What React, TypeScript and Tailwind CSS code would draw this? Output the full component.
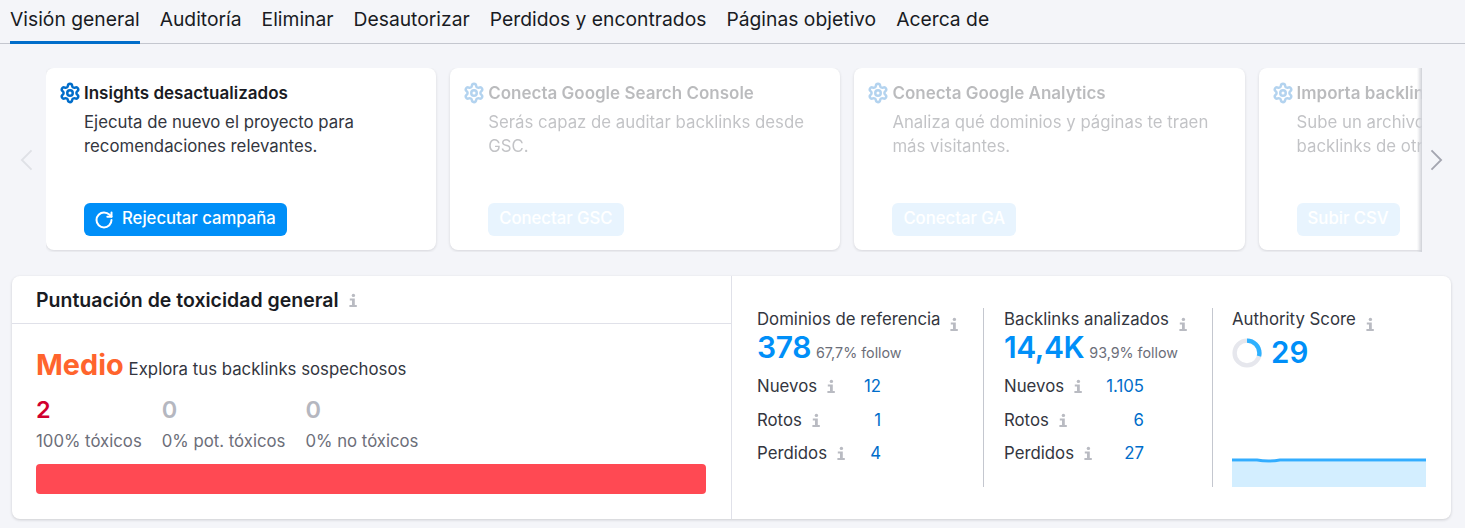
import { RotateCw, Settings } from "lucide-react";

const tabs = [
  "Visión general",
  "Auditoría",
  "Eliminar",
  "Desautorizar",
  "Perdidos y encontrados",
  "Páginas objetivo",
  "Acerca de",
];

const cards = [
  {
    title: "Insights desactualizados",
    lines: ["Ejecuta de nuevo el proyecto para", "recomendaciones relevantes."],
    button: "Rejecutar campaña",
    active: true,
  },
  {
    title: "Conecta Google Search Console",
    lines: ["Serás capaz de auditar backlinks desde", "GSC."],
    button: "Conectar GSC",
  },
  {
    title: "Conecta Google Analytics",
    lines: ["Analiza qué dominios y páginas te traen", "más visitantes."],
    button: "Conectar GA",
  },
  {
    title: "Importa backlinks",
    lines: ["Sube un archivo CSV con", "backlinks de otras fuentes"],
    button: "Subir CSV",
  },
];

function InfoIcon() {
  return (
    <svg viewBox="0 0 8 14" className="h-[15px] w-[8px] shrink-0 fill-[#b9bbc2]">
      <circle cx="4.4" cy="1.9" r="1.7" />
      <path d="M.8 5h5v6.6h2v2H.4v-2h2.6V7H.8z" />
    </svg>
  );
}

function Chevron({ left, className }: { left?: boolean; className: string }) {
  return (
    <svg viewBox="0 0 14 24" fill="none" className={`h-[22px] w-[13px] shrink-0 ${className}`}>
      <path
        d={left ? "M12.5 1.5 2 12l10.5 10.5" : "M1.5 1.5 12 12 1.5 22.5"}
        stroke="currentColor"
        strokeWidth="2"
      />
    </svg>
  );
}

function Card(props: { title: string; lines: string[]; button: string; active?: boolean }) {
  return (
    <div className="h-[182px] w-[390.2px] shrink-0 rounded-lg bg-white pl-[14px] pt-[14px] shadow-[0_1px_3px_rgba(25,27,35,0.14)]">
      <div className={`flex h-full flex-col pb-[14px] ${props.active ? "" : "opacity-30"}`}>
        <div className="flex h-[22px] items-center">
          <Settings size={22} strokeWidth={2.7} className="-ml-[1px] mr-[3px] shrink-0 text-[#006dca]" />
          <span className="whitespace-nowrap pt-[2px] text-[17px] font-semibold text-[#191b23]">{props.title}</span>
        </div>
        <div className="mt-[6px] pl-6 text-[16.8px] leading-6 whitespace-nowrap text-[#333640]">
          {props.lines.map((l) => (
            <p key={l}>{l}</p>
          ))}
        </div>
        <div className="mt-auto pl-6">
          <div
            className={`inline-flex h-[33px] items-center gap-[8px] rounded-md pr-[11px] pb-[2px] text-[16.7px] font-medium text-white ${
              props.active ? "bg-[#008ff8] pl-[10px]" : "bg-[#8fcbfa] pl-[11px] opacity-70"
            }`}
          >
            {props.active && <RotateCw size={20} strokeWidth={2.4} className="mt-[2px]" />}
            <span className="whitespace-nowrap">{props.button}</span>
          </div>
        </div>
      </div>
    </div>
  );
}

function Metric(props: {
  title: string;
  value: string;
  follow: string;
  rows: [string, string][];
  rowsWidth: string;
  className: string;
}) {
  return (
    <div className={props.className}>
      <div className="flex h-[24px] items-end gap-[10px] text-[16.8px] text-[#333640]">
        <span className="whitespace-nowrap">{props.title}</span>
        <InfoIcon />
      </div>
      <div className="-mt-[2px] flex h-[34px] items-center gap-[5px]">
        <span className="text-[30px] leading-none font-semibold tracking-[-0.4px] text-[#008ff8]">{props.value}</span>
        <span className="mt-[11px] text-[14.3px] whitespace-nowrap text-[#6c6e79]">{props.follow}</span>
      </div>
      <div className={`mt-[6px] ${props.rowsWidth}`}>
        {props.rows.map(([label, value]) => (
          <div key={label} className="flex h-[33.5px] items-center gap-[10px] text-[16.8px] text-[#333640]">
            <span>{label}</span>
            <InfoIcon />
            <span className="ml-auto text-[#006dca]">{value}</span>
          </div>
        ))}
      </div>
    </div>
  );
}

export default function App() {
  return (
    <div className="h-[528px] w-[1465px] overflow-hidden bg-[#f4f5f9] font-['Inter',sans-serif]">
      <nav className="flex h-[44px] gap-5 border-b border-[#c4c7cf] pl-[10px]">
        {tabs.map((t, i) => (
          <div
            key={t}
            className={`h-[44px] pt-[6px] text-[19.3px] leading-[26px] whitespace-nowrap text-[#191b23] ${
              i === 0 ? "border-b-[3px] border-[#006dca]" : ""
            }`}
          >
            {t}
          </div>
        ))}
      </nav>

      <section className="mt-6 flex h-[184px] items-start">
        <div className="flex h-[184px] w-[46px] items-center pl-[20px]">
          <Chevron left className="text-[#dfe1e6]" />
        </div>
        <div className="relative h-[184px] w-[1376px] overflow-hidden">
          <div className="flex h-[184px] gap-[14px]">
            {cards.map((c) => (
              <Card key={c.title} {...c} />
            ))}
          </div>
          <div className="absolute top-0 right-0 h-[184px] w-[5px] bg-gradient-to-r from-transparent to-[#d0d2d8]" />
        </div>
        <div className="flex h-[184px] items-center pl-[8px]">
          <Chevron className="text-[#a4a6b0]" />
        </div>
      </section>

      <section className="mx-3 mt-6 flex h-[243px] w-[1439px] rounded-lg bg-white shadow-[0_1px_3px_rgba(25,27,35,0.18)]">
        <div className="w-[720px] border-r border-[#e0e1e9]">
          <div className="flex h-[48px] items-center gap-[10px] border-b border-[#e0e1e9] pt-[2px] pl-6">
            <span className="text-[19.5px] font-semibold text-[#191b23]">Puntuación de toxicidad general</span>
            <InfoIcon />
          </div>
          <div className="pl-6 pr-[25px] pt-[21px]">
            <div className="flex h-[40px] items-center gap-[5px]">
              <span className="text-[28.8px] leading-none font-bold text-[#ff642d]">Medio</span>
              <span className="mt-[10px] text-[16.8px] text-[#333640]">Explora tus backlinks sospechosos</span>
            </div>
            <div className="mt-[10px] flex gap-5">
              <div>
                <div className="text-[23.5px] leading-[30px] font-semibold text-[#d1002f]">2</div>
                <div className="mt-1 text-[16.75px] leading-6 text-[#6c6e79]">100% tóxicos</div>
              </div>
              <div>
                <div className="text-[23.5px] leading-[30px] font-semibold text-[#b5b7c0]">0</div>
                <div className="mt-1 text-[16.75px] leading-6 text-[#6c6e79]">0% pot. tóxicos</div>
              </div>
              <div>
                <div className="text-[23.5px] leading-[30px] font-semibold text-[#b5b7c0]">0</div>
                <div className="mt-1 text-[16.75px] leading-6 text-[#6c6e79]">0% no tóxicos</div>
              </div>
            </div>
            <div className="mt-[11px] h-[30px] rounded-sm bg-[#ff4953]" />
          </div>
        </div>

        <div className="mt-8 flex h-[179px] flex-1 pl-[25px]">
          <Metric
            title="Dominios de referencia"
            value="378"
            follow="67,7% follow"
            rowsWidth="w-[124px]"
            className="h-[179px] w-[227px] border-r border-[#c4c7cf]"
            rows={[
              ["Nuevos", "12"],
              ["Rotos", "1"],
              ["Perdidos", "4"],
            ]}
          />
          <div className="pl-[20px]">
            <Metric
              title="Backlinks analizados"
              value="14,4K"
              follow="93,9% follow"
              rowsWidth="w-[140px]"
              className="h-[179px] w-[209px] border-r border-[#c4c7cf]"
              rows={[
                ["Nuevos", "1.105"],
                ["Rotos", "6"],
                ["Perdidos", "27"],
              ]}
            />
          </div>
          <div className="box-content flex h-[179px] w-[194px] flex-col pl-[19px]">
            <div className="flex h-[24px] items-end gap-[10px] text-[16.8px] whitespace-nowrap text-[#333640]">
              Authority Score
              <InfoIcon />
            </div>
            <div className="mt-[2px] flex h-[38px] items-center gap-[9px]">
              <svg viewBox="0 0 30 30" className="h-[30px] w-[30px]">
                <circle cx="15" cy="15" r="12.4" fill="none" stroke="#e6e7ed" strokeWidth="4.4" />
                <circle
                  cx="15"
                  cy="15"
                  r="12.4"
                  fill="none"
                  stroke="#2eb1ff"
                  strokeWidth="4.4"
                  strokeDasharray="22.6 77.9"
                  transform="rotate(-90 15 15)"
                />
              </svg>
              <span className="text-[29.5px] leading-none font-semibold text-[#008ff8]">29</span>
            </div>
            <svg viewBox="0 0 194 30" className="mt-auto block h-[30px] w-[194px]">
              <path d="M0 4.5H25Q36 6.5 48 4.5H194V30H0z" fill="#d3eeff" />
              <path d="M0 3H25Q36 5 48 3H194" fill="none" stroke="#33adff" strokeWidth="3" />
            </svg>
          </div>
        </div>
      </section>
    </div>
  );
}
